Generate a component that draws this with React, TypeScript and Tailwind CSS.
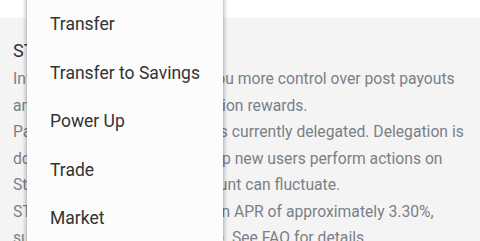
export default function App() {
  const items = ["Power Down", "Transfer", "Transfer to Savings", "Power Up", "Trade", "Market", "Delegate"];

  return (
    <div className="relative h-[241px] w-[480px] overflow-hidden bg-white font-['Roboto',sans-serif]">
      <div className="h-[18px] bg-white" />
      <div className="bg-[#f4f4f4] px-[13px] pt-[20px] pb-10">
        <div className="text-[18px] leading-[26px] text-[#333333]">STEEM POWER</div>
        <div className="mt-[2px] whitespace-nowrap text-[15.7px] leading-[26.5px] text-[#7a8087]">
          <p>
            Influence tokens which give you more control over post payouts
            <br />
            and allow you to earn on curation rewards.
          </p>
          <p>
            Part of bob's STEEM POWER is currently delegated. Delegation is
            <br />
            donated for influence or to help new users perform actions on
            <br />
            Steemit. Your delegation amount can fluctuate.
          </p>
          <p>
            STEEM POWER increases at an APR of approximately 3.30%,
            <br />
            subject to blockchain variance. See FAQ for details.
          </p>
        </div>
      </div>

      <ul className="absolute top-[-48.5px] left-[27px] w-[196px] bg-[#fcfcfc] shadow-[0_2px_5px_rgba(0,0,0,0.45)]">
        {items.map((label) => (
          <li
            key={label}
            className="flex h-[48.5px] items-center pl-[23px] text-[17.5px] text-[#333333]"
          >
            {label}
          </li>
        ))}
      </ul>
    </div>
  );
}
